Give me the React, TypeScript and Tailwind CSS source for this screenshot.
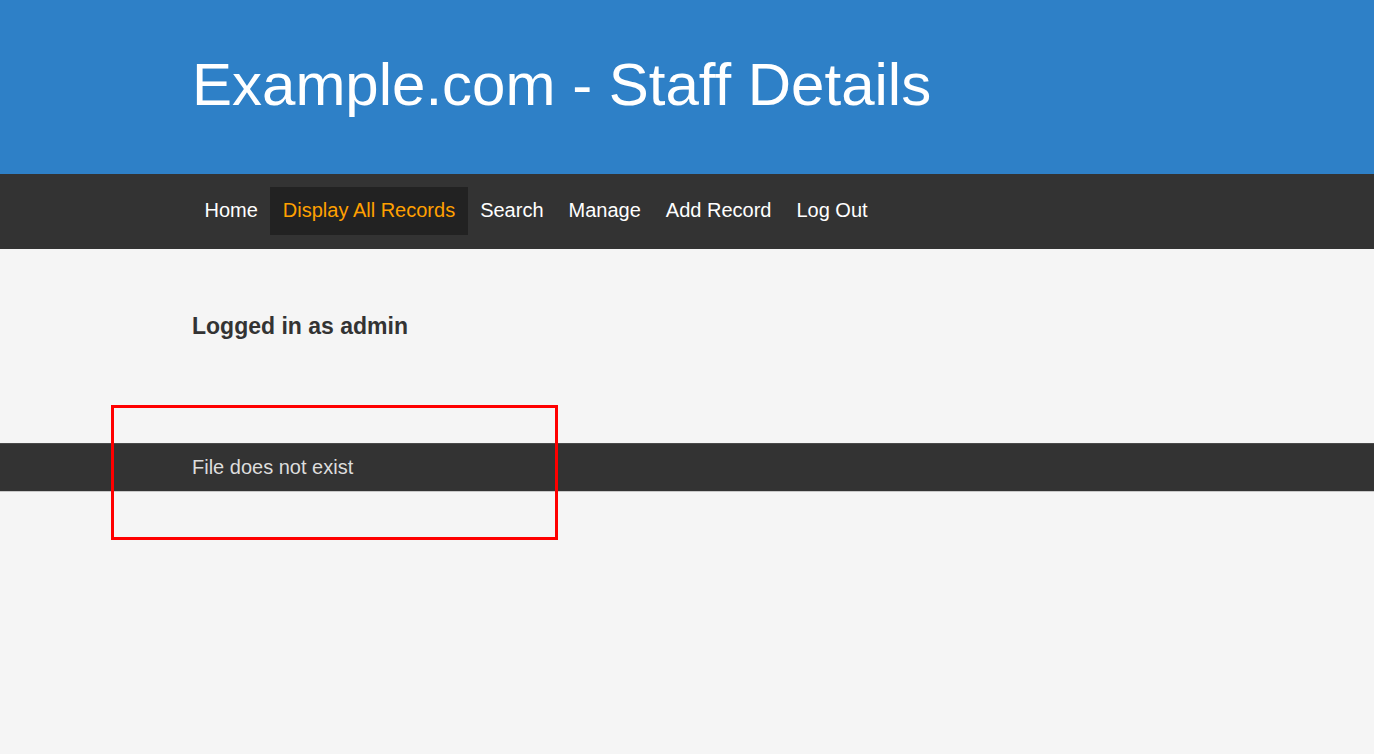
import React from "react";

const navItems = ["Home", "Display All Records", "Search", "Manage", "Add Record", "Log Out"];

export default function App() {
  return (
    <div
      className="relative min-h-screen bg-[#f5f5f5]"
      style={{ fontFamily: '"Liberation Sans", Arial, sans-serif' }}
    >
      <header className="h-[174px] bg-[#2e80c7]">
        <div className="max-w-[990px] mx-auto pt-[55px]">
          <h1 className="text-[60px] leading-[60px] text-white font-normal">Example.com - Staff Details</h1>
        </div>
      </header>
      <nav className="h-[75px] bg-[#333333]">
        <div className="max-w-[990px] mx-auto h-full flex items-start pt-[13px]">
          {navItems.map((item) => {
            const active = item === "Display All Records";
            return (
              <a
                key={item}
                className={
                  active
                    ? "h-12 px-[12.5px] pb-[2px] flex items-center text-[20px] bg-[#222222] text-[#ffa000]"
                    : "h-12 px-[12.5px] pb-[2px] flex items-center text-[20px] text-white"
                }
              >
                {item}
              </a>
            );
          })}
        </div>
      </nav>
      <main className="max-w-[990px] mx-auto pt-[64px]">
        <h3 className="text-[23px] leading-[26px] h-[26px] font-bold text-[#333333]">Logged in as admin</h3>
      </main>
      <footer className="mt-[104px] bg-[#333333] border-t border-t-[#4a4a4a] border-b border-b-[#c8c8c8]">
        <div className="max-w-[990px] mx-auto h-[47px] leading-[46px] text-[20px] text-[#dddddd]">
          File does not exist
        </div>
      </footer>
      <div className="absolute left-[111px] top-[405px] w-[447px] h-[135px] border-[3px] border-[#ff0000] pointer-events-none" />
    </div>
  );
}
